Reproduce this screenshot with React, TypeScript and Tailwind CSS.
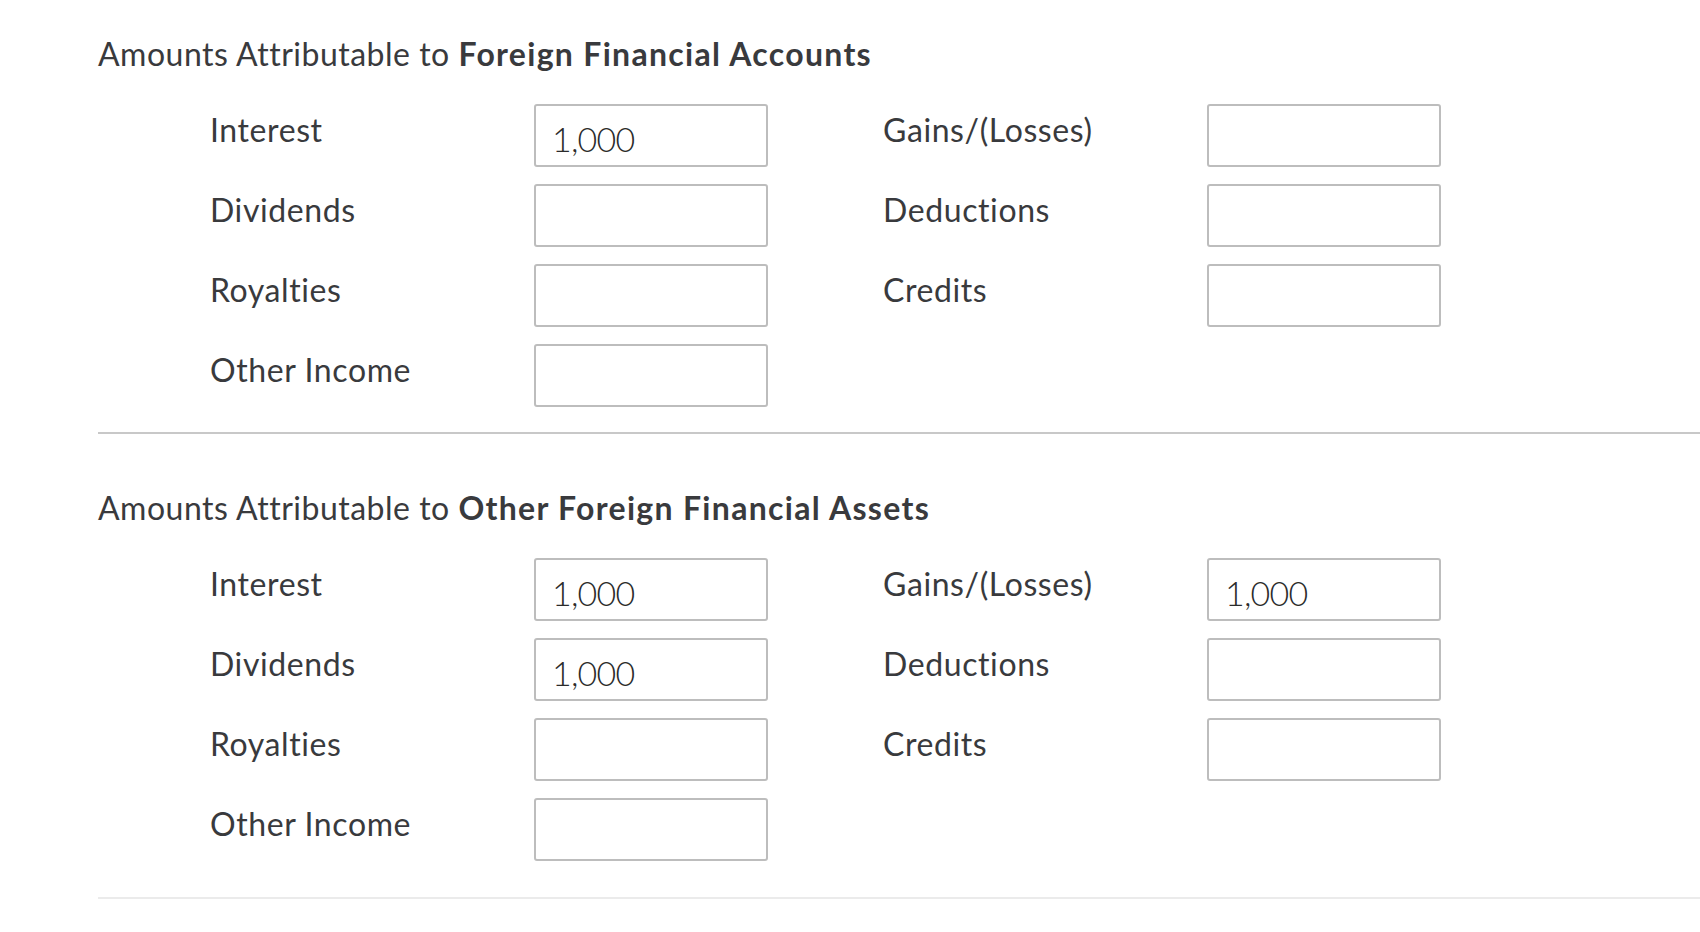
const font = { fontFamily: 'Lato, "Open Sans", sans-serif' }

type Field = { label: string; value?: string }

function FieldRow({ field }: { field: Field }) {
  return (
    <div className="flex items-start">
      <label className="-ml-[2px] w-[324px] pt-[8px] text-[32px] leading-[36px] tracking-[0.6px] text-[#393a3d]">{field.label}</label>
      <input
        type="text"
        defaultValue={field.value ?? ''}
        className="h-[63px] w-[234px] rounded-[3px] border-2 border-[#bdbdbd] bg-white px-[16px] pt-[6px] text-[34px] font-light tracking-[-0.8px] text-[#2b2b2b] outline-none"
        style={font}
      />
    </div>
  )
}

function Section({
  title,
  bold,
  left,
  right,
  last,
}: {
  title: string
  bold: string
  left: Field[]
  right: Field[]
  last?: boolean
}) {
  return (
    <section>
      <h2 className="text-[32px] leading-[40px] tracking-[0.5px] text-[#393a3d]">
        {title} <span className="font-bold tracking-[1.3px]">{bold}</span>
      </h2>
      <div className="mt-[30px] flex gap-[117px] pl-[114px]">
        <div className="flex flex-col gap-[17px]">
          {left.map((f) => (
            <FieldRow key={f.label} field={f} />
          ))}
        </div>
        <div className="flex flex-col gap-[17px]">
          {right.map((f) => (
            <FieldRow key={f.label} field={f} />
          ))}
        </div>
      </div>
      <div className={last ? 'mt-[36px] h-[2px] bg-[#ebebeb]' : 'mt-[25px] h-[2px] bg-[#c8c8c8]'} />
    </section>
  )
}

export default function App() {
  return (
    <div className="min-h-screen bg-white pl-[98px] pt-[34px]" style={font}>
      <Section
        title="Amounts Attributable to"
        bold="Foreign Financial Accounts"
        left={[{ label: 'Interest', value: '1,000' }, { label: 'Dividends' }, { label: 'Royalties' }, { label: 'Other Income' }]}
        right={[{ label: 'Gains/(Losses)' }, { label: 'Deductions' }, { label: 'Credits' }]}
      />
      <div className="mt-[54px]">
        <Section
          title="Amounts Attributable to"
          bold="Other Foreign Financial Assets"
          left={[
            { label: 'Interest', value: '1,000' },
            { label: 'Dividends', value: '1,000' },
            { label: 'Royalties' },
            { label: 'Other Income' },
          ]}
          right={[{ label: 'Gains/(Losses)', value: '1,000' }, { label: 'Deductions' }, { label: 'Credits' }]}
          last
        />
      </div>
    </div>
  )
}
